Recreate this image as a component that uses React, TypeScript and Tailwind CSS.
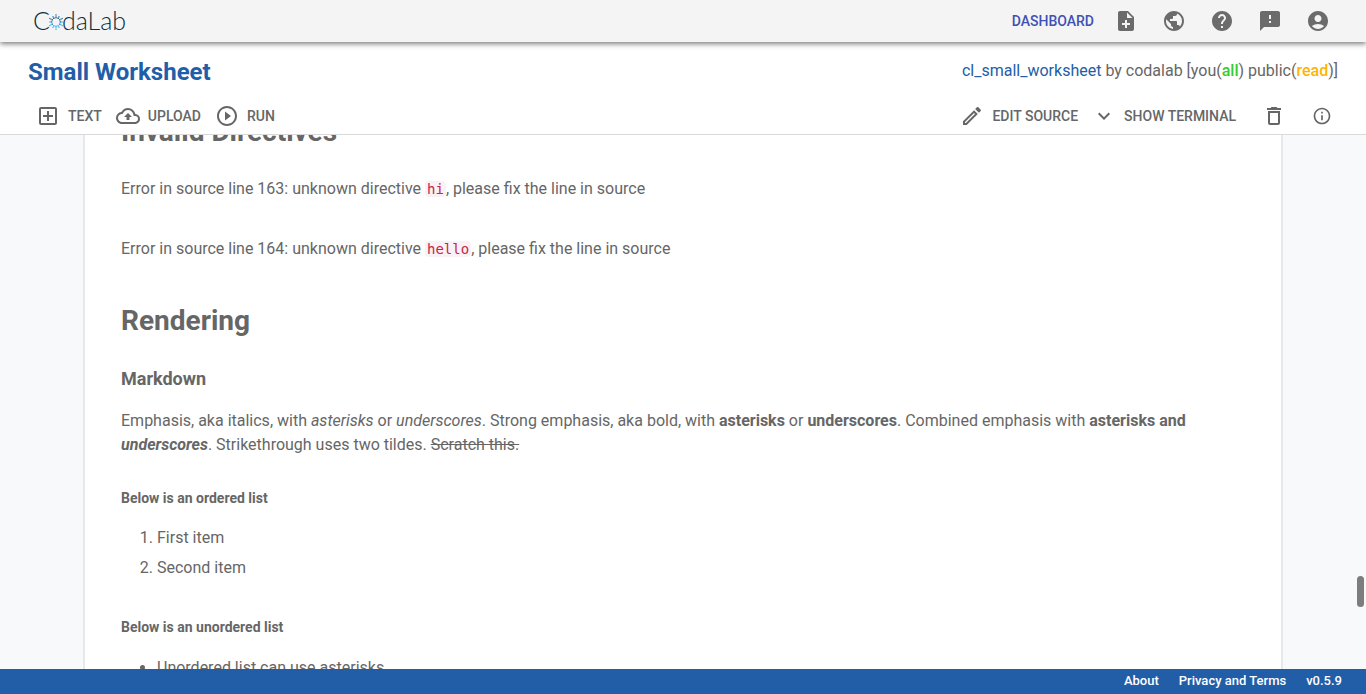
import type { ReactNode } from 'react';
import {
  MdAccountCircle,
  MdDeleteOutline,
  MdExpandMore,
  MdFeedback,
  MdHelp,
  MdInfoOutline,
  MdNoteAdd,
  MdOutlineAddBox,
  MdOutlineCloudUpload,
  MdOutlineEdit,
  MdPlayCircleOutline,
  MdPublic,
} from 'react-icons/md';

function LogoDots() {
  const rings = [
    { r: 4.4, n: 12, size: 0.9 },
    { r: 6, n: 12, size: 0.7 },
    { r: 7.4, n: 6, size: 0.6 },
  ];
  return (
    <svg viewBox="-8 -8 16 16" className="-mx-0.5 mt-1 size-4" aria-hidden="true">
      {rings.flatMap(({ r, n, size }) =>
        Array.from({ length: n }, (_, i) => {
          const a = (i / n) * Math.PI * 2 + Math.PI / 2;
          const y = Math.sin(a) * r;
          return (
            <circle
              key={`${r}-${i}`}
              cx={Math.cos(a) * r}
              cy={y}
              r={size}
              fill={y < -2 ? '#2f6f94' : y < 3 ? '#3796cc' : '#35b6f2'}
            />
          );
        }),
      )}
    </svg>
  );
}

function IconButton({ label, children }: { label: string; children: ReactNode }) {
  return (
    <button type="button" aria-label={label} className="flex w-12 justify-center">
      {children}
    </button>
  );
}

function ToolButton({ icon, children }: { icon: ReactNode; children: ReactNode }) {
  return (
    <button type="button" className="flex items-center gap-2 text-sm leading-5 font-medium">
      {icon}
      {children}
    </button>
  );
}

function Code({ children }: { children: ReactNode }) {
  return (
    <code className="rounded bg-[#f9f2f4] px-0.5 font-['DejaVu_Sans_Mono',monospace] text-sm text-[#c7254e]">
      {children}
    </code>
  );
}

export default function App() {
  return (
    <div className="flex h-screen flex-col overflow-hidden bg-[#f8f9fb] font-[Roboto,sans-serif] text-base text-[#666]">
      <header className="z-10 flex h-[42px] shrink-0 items-center justify-between bg-[#f4f4f4] pr-6 pl-[33px] shadow-[0_2px_5px_rgba(0,0,0,0.5)]">
        <a
          href="#home"
          aria-label="CodaLab"
          className="flex items-center pb-0.5 font-[Lato,sans-serif] text-[25px] leading-8 font-light text-[#0b2f3d]"
        >
          C<LogoDots />daLab
        </a>
        <nav className="flex items-center text-[#6b6b6b]">
          <a href="#dashboard" className="mr-2 text-sm font-medium text-[#3f51b5]">
            DASHBOARD
          </a>
          <IconButton label="New worksheet"><MdNoteAdd size={24} /></IconButton>
          <IconButton label="Gallery"><MdPublic size={24} /></IconButton>
          <IconButton label="Help"><MdHelp size={24} /></IconButton>
          <IconButton label="Feedback"><MdFeedback size={24} /></IconButton>
          <IconButton label="Account"><MdAccountCircle size={24} /></IconButton>
        </nav>
      </header>

      <section className="shrink-0 border-b border-[#d9d9d9] bg-white pt-3.5">
        <div className="flex items-start justify-between px-7">
          <h1 className="text-2xl leading-8 font-bold text-[#225ea8]">Small Worksheet</h1>
          <p className="leading-[30px]">
            <a href="#worksheet" className="text-[#225ea8]">cl_small_worksheet</a> by codalab [you(
            <span className="font-medium text-[#32cd32]">all</span>) public(
            <span className="font-medium text-[#ffb300]">read</span>)]
          </p>
        </div>
        <div className="mt-2.5 flex h-9 items-center justify-between pr-5 pl-9">
          <div className="flex items-center gap-3.5">
            <ToolButton icon={<MdOutlineAddBox size={24} />}>TEXT</ToolButton>
            <ToolButton icon={<MdOutlineCloudUpload size={24} />}>UPLOAD</ToolButton>
            <ToolButton icon={<MdPlayCircleOutline size={24} />}>RUN</ToolButton>
          </div>
          <div className="flex items-center gap-3.5">
            <ToolButton icon={<MdOutlineEdit size={24} />}>EDIT SOURCE</ToolButton>
            <ToolButton icon={<MdExpandMore size={24} />}>SHOW TERMINAL</ToolButton>
            <div className="flex items-center">
              <IconButton label="Delete"><MdDeleteOutline size={24} /></IconButton>
              <IconButton label="Information"><MdInfoOutline size={20} /></IconButton>
            </div>
          </div>
        </div>
      </section>

      <main className="relative min-h-0 flex-1 overflow-hidden">
        <article className="mx-auto -mt-5 min-h-full w-11/12 max-w-[1200px] border-x-2 border-[#e5e8ec] bg-white px-9 pb-12">
          <h2 className="text-[28px] leading-[34px] font-bold">Invalid Directives</h2>
          <p className="mt-7 leading-6">
            Error in source line 163: unknown directive <Code>hi</Code>, please fix the line in source
          </p>
          <p className="mt-9 leading-6">
            Error in source line 164: unknown directive <Code>hello</Code>, please fix the line in source
          </p>
          <h2 className="mt-[43px] text-[28px] leading-[34px] font-bold">Rendering</h2>
          <h3 className="mt-[29px] text-lg leading-6 font-bold">Markdown</h3>
          <p className="mt-[18px] leading-6">
            Emphasis, aka italics, with <em>asterisks</em> or <em>underscores</em>. Strong emphasis, aka
            bold, with <strong>asterisks</strong> or <strong>underscores</strong>. Combined emphasis with{' '}
            <strong>
              asterisks and <em>underscores</em>
            </strong>
            . Strikethrough uses two tildes. <del>Scratch this.</del>
          </p>
          <h4 className="mt-[31px] text-sm leading-5 font-bold">Below is an ordered list</h4>
          <ol className="mt-[15px] list-decimal pl-9 leading-[30px]">
            <li>First item</li>
            <li>Second item</li>
          </ol>
          <h4 className="mt-[34px] text-sm leading-5 font-bold">Below is an unordered list</h4>
          <ul className="mt-4 list-disc pl-9 leading-[30px]">
            <li>Unordered list can use asterisks</li>
          </ul>
        </article>
        <div className="absolute right-0.5 bottom-[62px] h-[31px] w-[7px] rounded-full bg-[#7d7d7d]" />
      </main>

      <footer className="flex h-[25px] shrink-0 items-center justify-end gap-5 bg-[#225ea8] pr-6 pb-0.5 text-[13px] font-medium text-white">
        <a href="#about">About</a>
        <a href="#privacy">Privacy and Terms</a>
        <span>v0.5.9</span>
      </footer>
    </div>
  );
}
